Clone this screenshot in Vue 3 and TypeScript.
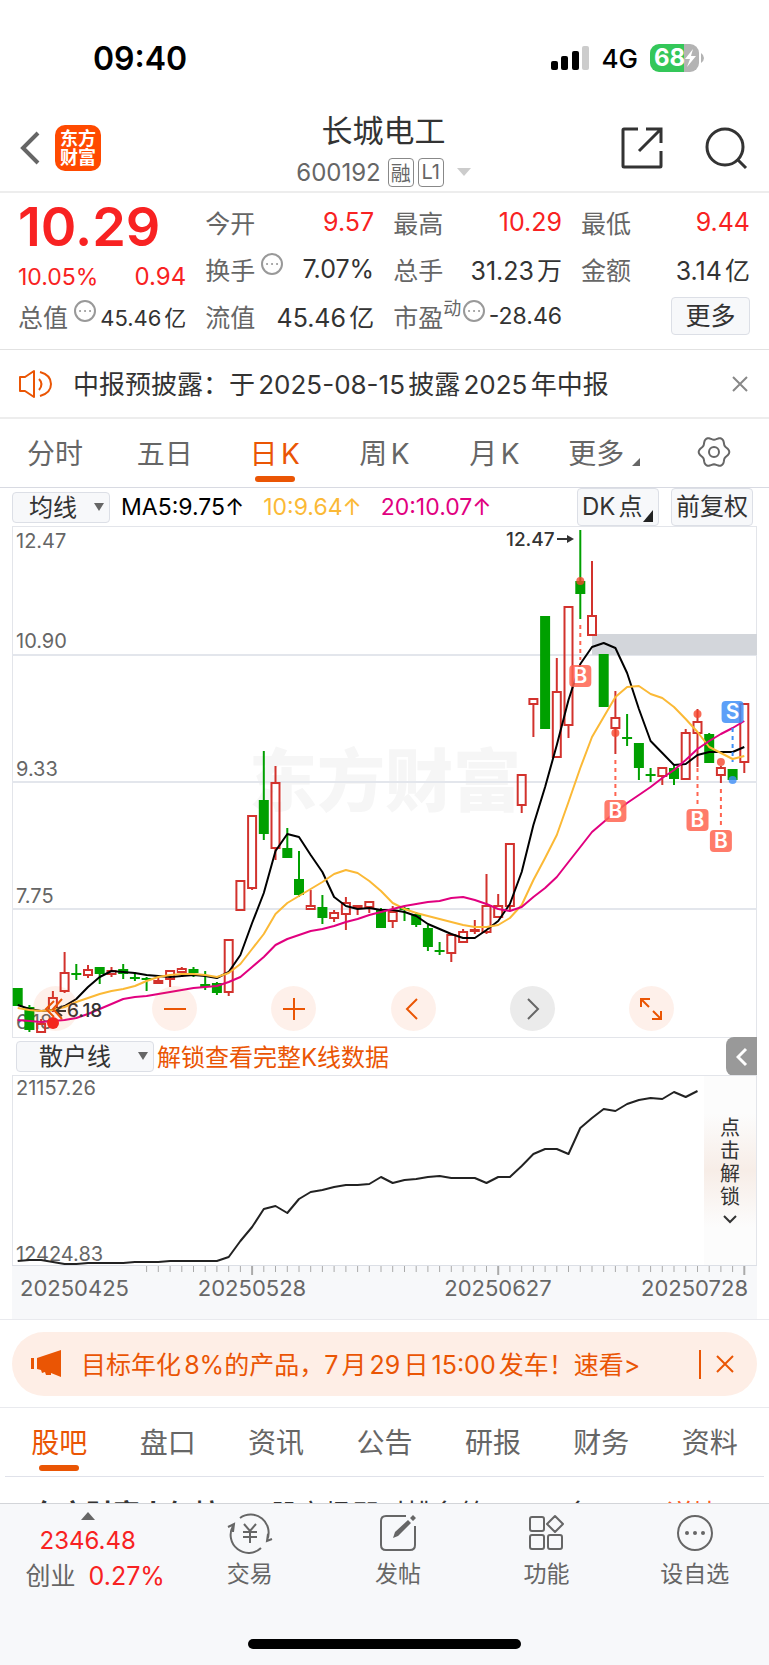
<script setup lang="ts">
import { ref } from 'vue'

type Candle = [up: number, high: number, top: number, bottom: number, low: number]

const STEP = 11.72
const xAt = (i: number): number => Math.round((5.7 + i * STEP) * 10) / 10

const candles: Candle[] = [
  [0, 462, 462, 480, 480], [0, 479, 481, 504, 506], [1, 493, 498, 506, 507], [1, 465, 472, 484, 486],
  [1, 426, 447, 465, 467], [0, 438, 447, 448, 454], [1, 439, 444, 449, 452], [0, 441, 441, 448, 458],
  [1, 441, 445, 448, 451], [0, 438, 443, 448, 453], [0, 448, 451, 452, 455], [0, 451, 452, 454, 465],
  [1, 451, 455, 457, 457], [1, 445, 445, 453, 461], [1, 441, 443, 446, 451], [0, 441, 443, 447, 451],
  [0, 445, 458, 461, 464], [0, 456, 457, 467, 469], [1, 414, 414, 466, 470], [1, 355, 355, 384, 384],
  [1, 290, 290, 362, 364], [0, 225, 274, 308, 314], [1, 240, 257, 322, 334], [0, 302, 322, 332, 332],
  [0, 325, 353, 369, 371], [1, 364, 380, 383, 383], [0, 369, 381, 392, 398], [1, 384, 387, 392, 396],
  [1, 371, 377, 388, 404], [1, 379, 380, 381, 389], [1, 376, 376, 381, 387], [0, 382, 383, 402, 402],
  [1, 380, 386, 395, 402], [0, 381, 382, 384, 395], [0, 386, 388, 399, 401], [0, 399, 402, 421, 425],
  [0, 416, 424, 425, 429], [1, 407, 409, 427, 436], [1, 403, 406, 416, 417], [1, 394, 404, 405, 408],
  [1, 348, 380, 406, 408], [1, 368, 380, 391, 392], [1, 318, 318, 380, 384], [1, 249, 249, 279, 287],
  [1, 173, 173, 178, 211], [0, 90, 90, 203, 203], [1, 132, 166, 231, 231], [1, 81, 81, 199, 212],
  [0, 4, 55, 68, 93], [1, 35, 90, 109, 109], [0, 128, 128, 181, 181], [1, 165, 192, 202, 228],
  [0, 188, 211, 213, 220], [0, 217, 217, 242, 254], [0, 242, 248, 250, 256], [1, 242, 242, 250, 259],
  [0, 240, 242, 253, 259], [1, 203, 207, 253, 253], [1, 183, 196, 207, 241], [0, 207, 208, 237, 237],
  [1, 240, 242, 249, 257], [0, 243, 243, 254, 254], [1, 178, 178, 236, 247],
]

const ma5 = [479, 483, 485, 484, 480, 473, 461, 451, 445, 446, 447, 449, 450, 451, 450, 449, 450, 452, 446, 429, 397, 367, 325, 308, 311, 329, 346, 371, 380, 383, 382, 384, 384, 386, 390, 398, 403, 408, 412, 412, 404, 395, 378, 346, 299, 261, 219, 174, 138, 121, 117, 122, 147, 183, 215, 227, 239, 238, 229, 226, 226, 226, 221]
const ma10 = [482, 484, 485, 484, 481, 476, 472, 468, 465, 463, 460, 455, 451, 449, 448, 448, 449, 451, 447, 438, 423, 408, 388, 377, 370, 363, 356, 348, 344, 347, 355, 365, 377, 383, 387, 390, 393, 396, 399, 401, 401, 399, 392, 379, 354, 332, 309, 276, 242, 211, 191, 171, 161, 160, 168, 172, 181, 193, 206, 221, 227, 233, 230]
const ma20 = [494, 495, 496, 495, 494, 492, 488, 483, 478, 473, 471, 470, 468, 466, 464, 462, 461, 460, 456, 451, 441, 431, 419, 413, 409, 405, 403, 400, 396, 393, 389, 386, 383, 380, 378, 376, 375, 372, 371, 374, 378, 383, 385, 381, 371, 362, 351, 336, 321, 306, 296, 286, 277, 269, 261, 252, 244, 234, 223, 215, 208, 202, 195]
const retail = [186, 185, 185, 187, 189, 189, 188, 188, 188, 188, 187, 187, 187, 186, 186, 186, 186, 186, 182, 166, 152, 134, 131, 138, 124, 117, 115, 112, 110, 110, 109, 102, 108, 105, 104, 102, 101, 103, 103, 103, 108, 102, 102, 91, 79, 74, 74, 79, 53, 43, 34, 36, 29, 25, 23, 24, 17, 22, 16]

const line = (ys: number[]): string => ys.map((y, i) => `${xAt(i)},${y}`).join(' ')

const signals = [
  { i: 48, kind: 'B', dot: 55, from: 99, to: 134, badge: 150 },
  { i: 51, kind: 'B', dot: 207, from: 234, to: 270, badge: 285 },
  { i: 58, kind: 'B', dot: 188, from: 242, to: 279, badge: 294 },
  { i: 60, kind: 'B', dot: 236, from: 263, to: 299, badge: 315 },
  { i: 61, kind: 'S', dot: 254, from: 202, to: 236, badge: 186 },
]

const gridLines = [129, 256, 383]
const prices = [
  { y: 22, t: '12.47' }, { y: 122, t: '10.90' }, { y: 250, t: '9.33' }, { y: 377, t: '7.75' }, { y: 503, t: '6.18' },
]

const ticks = Array.from({ length: 52 }, (_, n) => n + 11)
const isMajor = (i: number): boolean => i === 20 || i === 41 || i === 62

const gear = Array.from({ length: 73 }, (_, n) => {
  const a = (n * 5 * Math.PI) / 180
  const r = 13.8 + 1.5 * Math.cos(6 * a)
  return `${(17 + r * Math.cos(a)).toFixed(2)},${(17 + r * Math.sin(a)).toFixed(2)}`
}).join(' ')

const periods = ['分时', '五日', '日K', '周K', '月K', '更多']
const period = ref('日K')
const sections = ['股吧', '盘口', '资讯', '公告', '研报', '财务', '资料']
const section = ref('股吧')
const average = ref('均线')
const indicator = ref('散户线')
</script>

<template>
  <div class="app">
    <div class="status">
      <span class="clock">09:40</span>
      <div class="status-right">
        <svg width="39" height="25" viewBox="0 0 39 25" aria-hidden="true">
          <rect x="0" y="15" width="7" height="9" rx="2" />
          <rect x="10" y="10" width="7" height="14" rx="2" />
          <rect x="21" y="5" width="7" height="19" rx="2" />
          <rect x="31" y="0" width="7" height="24" rx="2" fill="#ccc" />
        </svg>
        <span class="net">4G</span>
        <svg width="54" height="28" viewBox="0 0 54 28" aria-label="68%">
          <path d="M9 0H34V28H9A9 9 0 0 1 0 19V9A9 9 0 0 1 9 0Z" fill="#34c759" />
          <path d="M34 0H40A9 9 0 0 1 49 9V19A9 9 0 0 1 40 28H34Z" fill="#b3b3b3" />
          <path d="M51 9Q54 11 54 14T51 19Z" fill="#b3b3b3" />
          <text x="4" y="22" class="battery-text">68</text>
          <path d="M43 5L35 15H40L37 23L46 12H41Z" fill="#fff" />
        </svg>
      </div>
    </div>

    <header class="header">
      <div class="header-left">
        <button class="bare" aria-label="返回">
          <svg width="22" height="36" viewBox="0 0 22 36" fill="none" stroke="#666" stroke-width="4"><path d="M19 3L4 18L19 33" /></svg>
        </button>
        <a href="#" class="logo"><span>东方</span><span>财富</span></a>
      </div>
      <div class="title">
        <h1>长城电工</h1>
        <div class="code">
          <span>600192</span>
          <span class="tags"><i class="tag">融</i><i class="tag">L1</i></span>
          <svg width="14" height="8" viewBox="0 0 14 8"><path d="M0 0H14L7 8Z" fill="#ccc" /></svg>
        </div>
      </div>
      <div class="header-right">
        <button class="bare" aria-label="分享">
          <svg width="44" height="44" viewBox="0 0 44 44" fill="none" stroke="#333" stroke-width="3">
            <path d="M18 3H4Q3 3 3 4V40Q3 41 4 41H40Q41 41 41 40V25" /><path d="M26 3H41V17M41 3L19 25" />
          </svg>
        </button>
        <button class="bare" aria-label="搜索">
          <svg width="44" height="44" viewBox="0 0 44 44" fill="none" stroke="#333" stroke-width="3">
            <circle cx="21" cy="21" r="18" /><path d="M33 33L42 42" />
          </svg>
        </button>
      </div>
    </header>

    <section class="quote">
      <div class="lead">
        <div class="price">10.29</div>
        <div class="pair change"><span>10.05%</span><span class="delta">0.94</span></div>
        <div class="pair cap">
          <span class="label">总值<svg class="dots" viewBox="0 0 22 22"><circle cx="11" cy="11" r="10" /><path d="M6 11h.1M11 11h.1M16 11h.1" /></svg></span>
          <span class="small">45.46亿</span>
        </div>
      </div>
      <div class="cells">
        <div class="pair"><span class="label">今开</span><span class="up">9.57</span></div>
        <div class="pair"><span class="label">最高</span><span class="up">10.29</span></div>
        <div class="pair"><span class="label">最低</span><span class="up">9.44</span></div>
        <div class="pair">
          <span class="label">换手<svg class="dots" viewBox="0 0 22 22"><circle cx="11" cy="11" r="10" /><path d="M6 11h.1M11 11h.1M16 11h.1" /></svg></span>
          <span>7.07%</span>
        </div>
        <div class="pair"><span class="label">总手</span><span>31.23万</span></div>
        <div class="pair"><span class="label">金额</span><span>3.14亿</span></div>
        <div class="pair"><span class="label">流值</span><span>45.46亿</span></div>
        <div class="pair">
          <span class="label">市盈<sup>动</sup><svg class="dots tight" viewBox="0 0 22 22"><circle cx="11" cy="11" r="10" /><path d="M6 11h.1M11 11h.1M16 11h.1" /></svg></span>
          <span class="ratio">-28.46</span>
        </div>
        <div class="pair end"><button class="more">更多</button></div>
      </div>
    </section>

    <section class="notice">
      <svg width="36" height="30" viewBox="0 0 36 30" fill="none" stroke="#ea5504" stroke-width="2" stroke-linejoin="round">
        <path d="M2 8H7L16 2V28L7 22H2Z" /><path d="M21 10Q26 15 21 21M22 3Q33 6 33 15T22 27" />
      </svg>
      <p>中报预披露：于2025-08-15披露2025年中报</p>
      <button class="bare" aria-label="关闭">
        <svg width="18" height="18" viewBox="0 0 18 18" stroke="#888" stroke-width="2"><path d="M2 2L16 16M16 2L2 16" /></svg>
      </button>
    </section>

    <nav class="periods">
      <button v-for="p in periods" :key="p" class="tab" :class="{ active: p === period }" @click="period = p">
        {{ p }}<svg v-if="p === '更多'" class="corner" width="8" height="8" viewBox="0 0 8 8"><path d="M8 0V8H0Z" fill="#666" /></svg>
      </button>
      <button class="tab" aria-label="设置">
        <svg width="34" height="34" viewBox="0 0 34 34" fill="none" stroke="#666" stroke-width="2">
          <polygon :points="gear" stroke-linejoin="round" /><circle cx="17" cy="17" r="5" />
        </svg>
      </button>
    </nav>

    <div class="ma-bar">
      <label class="pick">
        <select v-model="average" aria-label="主图指标"><option>均线</option></select>
      </label>
      <span class="ma five">MA5:9.75↑</span>
      <span class="ma ten">10:9.64↑</span>
      <span class="ma twenty">20:10.07↑</span>
      <span class="ma-buttons">
        <button>DK点<svg class="fold" width="10" height="12" viewBox="0 0 10 12"><path d="M10 0V12H0Z" fill="#222" /></svg></button>
        <button>前复权</button>
      </span>
    </div>

    <div class="chart">
      <svg class="plot" viewBox="0 1 745 510" role="img" aria-label="日K线图">
        <text x="237" y="280" class="watermark">东方财富</text>
        <path v-for="g in gridLines" :key="g" :d="`M0 ${g}H745`" stroke="#e3e6ec" stroke-width="2" />
        <rect x="580" y="108" width="165" height="21" fill="#d3d6db" />
        <text v-for="p in prices" :key="p.t" x="4" :y="p.y" class="axis-text">{{ p.t }}</text>
        <g v-for="(c, i) in candles" :key="i">
          <template v-if="c[0]">
            <path :d="`M${xAt(i)} ${c[1]}V${c[2]}M${xAt(i)} ${c[3]}V${c[4]}`" stroke="#d2322d" stroke-width="2" />
            <rect :x="xAt(i) - 4" :y="c[2]" width="8" :height="c[3] - c[2]" fill="none" stroke="#d2322d" stroke-width="2" />
          </template>
          <template v-else>
            <path :d="`M${xAt(i)} ${c[1]}V${c[4]}`" stroke="#00a000" stroke-width="2" />
            <rect :x="xAt(i) - 5" :y="c[2]" width="10" :height="Math.max(2, c[3] - c[2])" fill="#00a000" />
          </template>
        </g>
        <polyline :points="line(ma5)" class="curve" stroke="#000" />
        <polyline :points="line(ma10)" class="curve" stroke="#fbb936" />
        <polyline :points="line(ma20)" class="curve" stroke="#e1007f" />
        <g v-for="s in signals" :key="s.i" :class="s.kind === 'B' ? 'buy' : 'sell'">
          <path :d="`M${xAt(s.i)} ${s.from}V${s.to}`" stroke-width="2" stroke-dasharray="4 4" />
          <circle :cx="xAt(s.i)" :cy="s.dot" r="4" opacity="0.8" />
          <rect :x="xAt(s.i) - 11" :y="s.badge - 11" width="22" height="22" rx="4" opacity="0.85" />
          <text :x="xAt(s.i)" :y="s.badge + 7" class="badge-text">{{ s.kind }}</text>
        </g>
        <text x="494" y="20" class="mark-text">12.47</text>
        <path d="M545 13H556" stroke="#333" stroke-width="2" /><path d="M555 9L562 13L555 17Z" fill="#333" />
        <text x="55" y="491" class="mark-text">6.18</text>
        <path d="M45 485H54M50 480L44 485L50 490" fill="none" stroke="#333" stroke-width="2" />
        <circle cx="41" cy="497" r="6" fill="#f5221f" />
      </svg>
      <div class="controls">
        <button aria-label="最早"><svg viewBox="0 0 32 32"><path d="M22 6L13 16L22 26M14 8L6 16L14 24" /></svg></button>
        <button aria-label="缩小"><svg viewBox="0 0 32 32"><path d="M5 16H27" /></svg></button>
        <button aria-label="放大"><svg viewBox="0 0 32 32"><path d="M5 16H27M16 5V27" /></svg></button>
        <button aria-label="左移"><svg viewBox="0 0 32 32"><path d="M20 6L10 16L20 26" /></svg></button>
        <button aria-label="右移" class="muted"><svg viewBox="0 0 32 32"><path d="M12 6L22 16L12 26" /></svg></button>
        <button aria-label="全屏"><svg viewBox="0 0 32 32"><path d="M6 14V6H15M6 6L14 14M26 18V26H17M26 26L18 18" /></svg></button>
      </div>
    </div>

    <div class="sub-bar">
      <label class="pick wide">
        <select v-model="indicator" aria-label="副图指标"><option>散户线</option></select>
      </label>
      <a href="#" class="unlock-link">解锁查看完整K线数据</a>
      <button class="drawer" aria-label="展开">
        <svg width="12" height="20" viewBox="0 0 12 20" fill="none" stroke="#fff" stroke-width="3"><path d="M10 2L2 10L10 18" /></svg>
      </button>
    </div>

    <div class="chart">
      <svg class="plot" viewBox="0 1 745 189" role="img" aria-label="散户线">
        <text x="4" y="20" class="axis-text">21157.26</text>
        <text x="4" y="186" class="axis-text">12424.83</text>
        <polyline :points="line(retail)" class="curve" stroke="#222" />
      </svg>
      <button class="unlock">
        <span>点</span><span>击</span><span>解</span><span>锁</span>
        <svg width="14" height="9" viewBox="0 0 14 9" fill="none" stroke="#333" stroke-width="2"><path d="M1 1L7 7L13 1" /></svg>
      </button>
    </div>
    <div class="dates">
      <svg viewBox="0 0 745 53">
        <path v-for="i in ticks" :key="i" :d="`M${xAt(i)} 0V${isMajor(i) ? 9 : 6}`" stroke="#aaa" :stroke-width="isMajor(i) ? 2 : 1" />
        <text x="8" y="30">20250425</text>
        <text x="240" y="30" text-anchor="middle">20250528</text>
        <text x="486" y="30" text-anchor="middle">20250627</text>
        <text x="736" y="30" text-anchor="end">20250728</text>
      </svg>
    </div>

    <aside class="promo">
      <div class="promo-pill">
        <svg width="32" height="28" viewBox="0 0 32 28" fill="#ea5504">
          <path d="M0 8H3V19H0ZM6 8L30 0V27L20 23V25H15L14 22L11 23L10 20L6 19Z" />
        </svg>
        <a href="#">目标年化8%的产品，7月29日15:00发车！速看&gt;</a>
        <span class="bar"></span>
        <button class="bare" aria-label="关闭广告">
          <svg width="18" height="18" viewBox="0 0 18 18" stroke="#ea5504" stroke-width="2"><path d="M1 1L17 17M17 1L1 17" /></svg>
        </button>
      </div>
    </aside>

    <nav class="sections">
      <button v-for="s in sections" :key="s" class="tab" :class="{ active: s === section }" @click="section = s">{{ s }}</button>
    </nav>

    <div class="feed">
      <b>东方财富人气榜</b>
      <span>股市场即时排名第</span>
      <em>12</em>
      <span class="rank">名</span>
      <a href="#">详情</a>
    </div>

    <footer class="dock">
      <div class="dock-row">
        <a href="#" class="index">
          <svg width="14" height="8" viewBox="0 0 14 8"><path d="M0 8H14L7 0Z" fill="#666" /></svg>
          <span class="index-value">2346.48</span>
          <span class="index-line"><span class="index-name">创业</span><span>0.27%</span></span>
        </a>
        <button class="dock-item">
          <svg viewBox="0 0 44 40">
            <path d="M12 5A18 18 0 0 1 39 27M40 21L39 28L44 26" /><path d="M33 35A18 18 0 0 1 5 13M0 14L6 11L5 19" />
            <path d="M16 11L22 18L28 11M22 18V30M15 19H29M15 24H29" />
          </svg>
          <span>交易</span>
        </button>
        <button class="dock-item">
          <svg viewBox="0 0 44 40">
            <path d="M30 3H10Q5 3 5 8V32Q5 37 10 37H34Q39 37 39 32V13" />
            <path d="M17 25L19 19L32 7L35 10L22 23ZM34 5L37 2L40 5L37 8Z" fill="#666" stroke="none" />
          </svg>
          <span>发帖</span>
        </button>
        <button class="dock-item">
          <svg viewBox="0 0 44 40">
            <rect x="6" y="4" width="14" height="14" rx="2" /><rect x="6" y="22" width="14" height="14" rx="2" />
            <rect x="24" y="22" width="14" height="14" rx="2" /><path d="M31 3L39 11L31 19L23 11Z" stroke-linejoin="round" />
          </svg>
          <span>功能</span>
        </button>
        <button class="dock-item">
          <svg viewBox="0 0 44 40">
            <circle cx="22" cy="20" r="17" />
            <g fill="#666" stroke="none"><circle cx="14" cy="20" r="2" /><circle cx="22" cy="20" r="2" /><circle cx="30" cy="20" r="2" /></g>
          </svg>
          <span>设自选</span>
        </button>
      </div>
      <div class="home"></div>
    </footer>
  </div>
</template>

<style>
body { margin: 0; background: #fff; }
</style>

<style scoped>
* { box-sizing: border-box; }
.app {
  font-family: Inter, "Noto Sans CJK SC", sans-serif;
  font-size: 25px;
  color: #333;
  background: #fff;
  text-autospace: normal;
}
button, select { font: inherit; color: inherit; margin: 0; padding: 0; border: 0; background: none; text-autospace: inherit; }
a { color: inherit; text-decoration: none; }
svg { display: block; flex: none; }
.bare { line-height: 0; }

.status { display: flex; justify-content: space-between; align-items: center; height: 105px; padding: 11px 65px 0 93px; }
.clock { font-size: 32px; font-weight: 600; color: #000; }
.status-right { display: flex; align-items: center; gap: 12px; color: #000; }
.net { font-size: 26px; font-weight: 500; }
.battery-text { font-size: 24px; font-weight: 700; fill: #fff; }

.header { display: grid; grid-template-columns: 1fr auto 1fr; align-items: center; height: 88px; padding: 0 21px 0 19px; border-bottom: 2px solid #ededed; }
.header-left { display: flex; align-items: center; gap: 14px; }
.logo { display: flex; flex-direction: column; align-items: center; justify-content: center; width: 46px; height: 46px; border-radius: 10px; background: #ff4a00; color: #fff; font-size: 18px; line-height: 19px; font-weight: 700; }
.title { text-align: center; padding-top: 2px; }
h1 { margin: 0 0 6px; font-size: 31px; line-height: 40px; font-weight: 400; }
.code { display: flex; align-items: center; justify-content: center; gap: 7px; height: 30px; font-size: 24px; color: #666; }
.code svg { margin-left: 6px; }
.tags { display: flex; gap: 4px; }
.tag { display: flex; align-items: center; justify-content: center; width: 26px; height: 29px; border: 1px solid #888; border-radius: 4px; font-size: 20px; font-style: normal; }
.header-right { display: flex; justify-content: flex-end; gap: 40px; }

.quote { display: grid; grid-template-columns: minmax(0, 168fr) minmax(0, 544fr); padding: 5px 19px 10px 18px; column-gap: 19px; border-bottom: 1px solid #e2e2e2; }
.lead { display: grid; grid-template-rows: 57px 43px 36px; align-items: center; }
.price { font-size: 54px; line-height: 57px; font-weight: 600; color: #f82222; }
.pair { display: flex; justify-content: space-between; align-items: center; white-space: nowrap; }
.change { font-size: 23px; color: #f82222; }
.delta { font-size: 24px; }
.label { display: flex; align-items: center; color: #666; }
.small { font-size: 22px; }
.dots { width: 22px; height: 22px; margin: 0 0 10px 6px; fill: none; stroke: #999; stroke-width: 2; stroke-linecap: round; }
.dots.tight { margin-left: 2px; }
.cells { display: grid; grid-template-columns: repeat(3, minmax(0, 1fr)); grid-auto-rows: 47px; column-gap: 19px; }
.up { color: #f82222; }
.ratio { font-size: 23px; }
sup { font-size: 18px; line-height: 18px; margin-bottom: 14px; vertical-align: baseline; }
.end { justify-content: flex-end; }
.more { width: 79px; height: 38px; border: 1px solid #dcdfe6; border-radius: 4px; background: #f7f8fa; line-height: 36px; }

.notice { display: flex; align-items: center; height: 69px; padding: 0 20px 0 18px; border-bottom: 2px solid #ededed; }
.notice p { flex: 1; margin: 0 0 0 19px; padding-bottom: 3px; font-size: 26px; }

.periods, .sections { display: flex; position: relative; }
.tab { flex: 1 1 0; position: relative; display: flex; align-items: center; justify-content: center; height: 68px; padding-bottom: 2px; font-size: 28px; color: #666; }
.tab.active { color: #ea5504; }
.tab.active::after { content: ""; position: absolute; left: 50%; bottom: 5px; width: 40px; height: 6px; margin-left: -20px; border-radius: 3px; background: #ea5504; }
.periods { border-bottom: 1px solid #d8dae2; }
.corner { margin: 20px 0 0 8px; }

.ma-bar { display: flex; align-items: center; height: 38px; padding: 0 16px 0 12px; font-size: 24px; white-space: nowrap; }
.pick { position: relative; width: 98px; height: 31px; border: 1px solid #dcdfe6; border-radius: 4px; background: #f7f8fa; }
.pick select { appearance: none; display: block; width: 100%; height: 29px; padding-left: 16px; font-size: 24px; line-height: 29px; }
.pick::after { content: ""; position: absolute; right: 5px; top: 10px; border: 5px solid transparent; border-top: 8px solid #666; border-bottom: 0; pointer-events: none; }
.ma { font-size: 23px; }
.ma.five { margin-left: 11px; color: #000; }
.ma.ten { margin-left: 19px; color: #fbb936; }
.ma.twenty { margin-left: 19px; color: #e1007f; }
.ma-buttons { display: flex; gap: 12px; margin-left: auto; }
.ma-buttons button { position: relative; width: 82px; height: 38px; border: 1px solid #dcdfe6; border-radius: 4px; background: #f7f8fa; font-size: 24px; line-height: 36px; text-align: left; padding-left: 4px; }
.fold { position: absolute; right: 5px; bottom: 3px; }

.chart { position: relative; margin: 0 12px; border-top: 1px solid #e3e5ea; box-shadow: inset 1px 0 #e3e5ea, inset -1px 0 #e3e5ea; }
.plot { width: 100%; height: auto; }
.watermark { font-size: 68px; font-weight: 900; fill: #f6f6f6; }
.axis-text { font-size: 20px; fill: #666; }
.mark-text { font-size: 19px; font-weight: 500; fill: #333; }
.curve { fill: none; stroke-width: 2; stroke-linejoin: round; }
.buy { fill: #ff6450; stroke: #ff6450; }
.sell { fill: #3f8ff7; stroke: #3f8ff7; }
.buy circle, .buy rect, .sell circle, .sell rect { stroke: none; }
.buy circle { fill: #f5452c; }
.badge-text { font-size: 21px; font-weight: 600; fill: #fff; stroke: none; text-anchor: middle; }
.controls { position: absolute; left: 21px; right: 83px; bottom: 6px; display: flex; justify-content: space-between; }
.controls button { width: 45px; height: 45px; border-radius: 50%; background: rgba(240, 90, 20, 0.09); display: flex; align-items: center; justify-content: center; }
.controls svg { width: 32px; height: 32px; fill: none; stroke: #ea5504; stroke-width: 2; }
.controls .muted { background: #ebebeb; }
.controls .muted svg { stroke: #666; }

.sub-bar { display: flex; align-items: center; height: 38px; margin: 0 12px; padding-left: 4px; border-top: 1px solid #e3e5ea; }
.pick.wide { width: 138px; }
.pick.wide select { padding-left: 22px; }
.unlock-link { margin-left: 3px; padding-bottom: 2px; font-size: 24px; color: #ea5504; text-autospace: no-autospace; }
.drawer { display: flex; align-items: center; justify-content: center; width: 31px; height: 39px; margin-left: auto; border-radius: 8px 0 0 8px; background: #999; }
.unlock { position: absolute; right: 1px; top: 0; bottom: 0; width: 52px; display: flex; flex-direction: column; align-items: center; justify-content: center; font-size: 20px; line-height: 23px; background: linear-gradient(#fcfcfc 20%, #f7ede7 50%, #fcfcfc 80%); }
.unlock svg { margin-top: 6px; }
.dates { margin: 0 12px; background: #f7f8fa; border-top: 1px solid #dcdfe6; }
.dates svg { width: 100%; height: auto; }
.dates text { font-size: 22px; fill: #666; }

.promo { padding: 12px 12px 11px; border: solid #e9eaee; border-width: 1px 0; }
.promo-pill { display: flex; align-items: center; height: 64px; padding: 0 23px 0 19px; border-radius: 32px; background: #feeee6; color: #ea5504; }
.promo-pill a { margin-left: 18px; padding-bottom: 3px; }
.bar { width: 2px; height: 29px; margin: 0 15px 0 auto; background: #ea5504; }

.sections { margin: 0 5px; border-bottom: 1px solid #e0e2ea; }
.feed { display: flex; height: 26px; padding: 23px 32px 0; overflow: hidden; font-size: 27px; line-height: 30px; white-space: nowrap; }
.feed b { font-weight: 700; }
.feed span { margin-left: 50px; }
.feed em { margin-left: 40px; font-style: normal; color: #ff5a1f; }
.feed .rank { margin-left: 12px; }
.feed a { margin-left: 72px; color: #ff5a1f; }

.dock { padding-bottom: 16px; border-top: 1px solid #d3d5d9; background: #f7f8fa; }
.dock-row { display: grid; grid-template-columns: 175fr repeat(4, 148fr); height: 135px; align-items: start; }
.index { display: flex; flex-direction: column; align-items: center; padding-top: 8px; color: #f82222; }
.index-value { margin-top: 4px; font-size: 24px; line-height: 34px; }
.index-line { display: flex; gap: 13px; padding-left: 15px; line-height: 36px; }
.index-name { color: #666; }
.dock-item { display: flex; flex-direction: column; align-items: center; padding-top: 9px; font-size: 23px; line-height: 30px; color: #666; }
.dock-item span { margin-top: 6px; }
.dock-item svg { width: 44px; height: 40px; fill: none; stroke: #666; stroke-width: 2; overflow: visible; }
.home { width: 273px; height: 10px; margin: 0 auto; border-radius: 5px; background: #000; }
</style>
